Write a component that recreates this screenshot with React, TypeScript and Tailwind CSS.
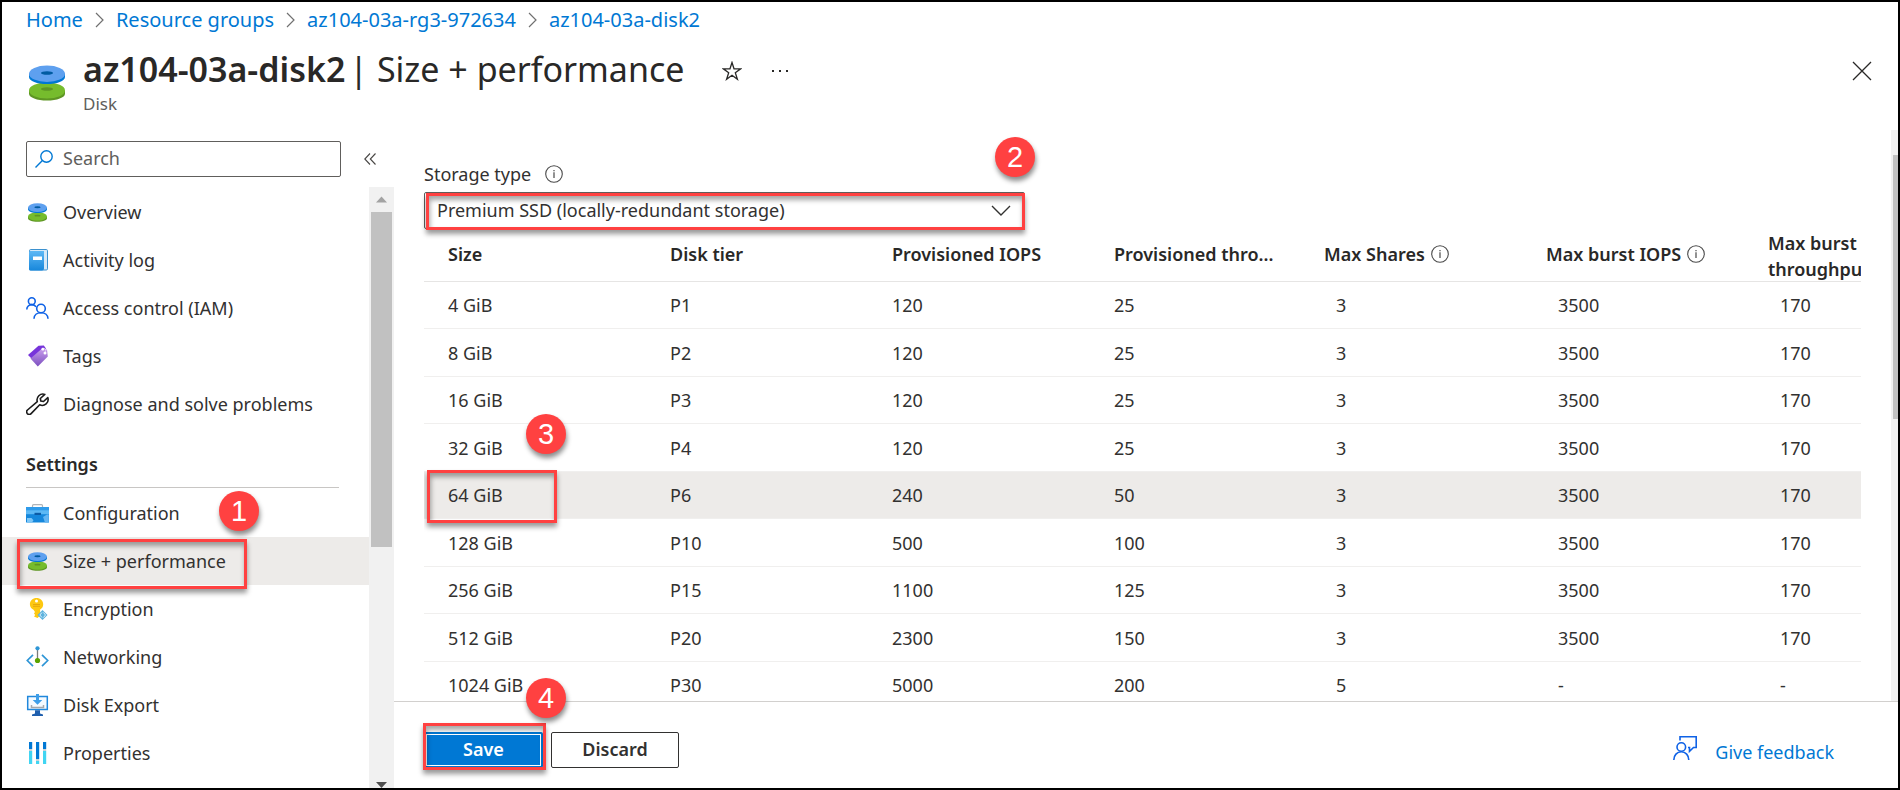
import { useState, type ReactNode } from "react";

type IconProps = { className?: string };

function DiskIcon({ className = "size-[19px]" }: IconProps) {
  return (
    <svg viewBox="0 0 36 36" className={className} aria-hidden="true">
      <path d="M0 25.5v3.2C0 32.600 8 35.500 18 35.500s18-2.900 18-6.800v-3.200z" fill="#5e9624" />
      <ellipse cx="18" cy="25.500" rx="18" ry="8" fill="#76bc2d" />
      <ellipse cx="18" cy="24" rx="6" ry="1.700" fill="#5e9624" />
      <path d="M0 8.500v3.400C0 16 8 19 18 19s18-3 18-7.100V8.500z" fill="#0078d4" />
      <ellipse cx="18" cy="8.700" rx="18" ry="8.200" fill="#5ea0ef" />
      <ellipse cx="18" cy="8" rx="6" ry="1.800" fill="#005ba1" />
    </svg>
  );
}

function LogIcon() {
  return (
    <svg viewBox="0 0 22 22" className="size-[22px]" aria-hidden="true">
      <defs>
        <linearGradient id="log" x1="0" y1="0" x2="0" y2="1">
          <stop offset="0" stopColor="#5eb8f5" />
          <stop offset="1" stopColor="#1787db" />
        </linearGradient>
      </defs>
      <rect x="2.500" y="0.500" width="18" height="20.500" rx="1.200" fill="#d5e9f8" stroke="#3c91cf" />
      <path d="M2 3a1.500 1.500 0 0 1 1.500-1H17v17.500a2 2 0 0 1-2 2H3.500A1.500 1.500 0 0 1 2 20z" fill="url(#log)" />
      <rect x="6" y="7.500" width="9" height="3.500" fill="#fff" />
    </svg>
  );
}

function PeopleIcon() {
  return (
    <svg viewBox="0 0 23 22" className="h-[22px] w-[23px]" fill="none" stroke="#0f62e6" strokeWidth="1.600" aria-hidden="true">
      <circle cx="5.800" cy="4.200" r="3.400" />
      <path d="M.8 12.500C.8 9.600 3 7.600 5.800 7.600c2 0 3.500.9 4.300 2.300" />
      <circle cx="15" cy="11.500" r="4.300" />
      <path d="M8 21.800c0-3.600 3-6 7-6s7 2.400 7 6" />
    </svg>
  );
}

function TagIcon() {
  return (
    <svg viewBox="0 0 22 22" className="size-[22px]" aria-hidden="true">
      <defs>
        <linearGradient id="tag" x1="0" y1="0" x2="0" y2="1">
          <stop offset="0" stopColor="#c69aeb" />
          <stop offset="1" stopColor="#7b4fbf" />
        </linearGradient>
      </defs>
      <path d="M1 10 11.500.8l5.300-.4 2.200 3L6 15z" fill="#7734da" />
      <path d="M3.500 13.500 14.200 4.200l5.800.4.800 7L10.800 21.500z" fill="url(#tag)" />
      <circle cx="15.800" cy="4.200" r="1.400" fill="#fff" />
      <circle cx="18" cy="8" r="1.500" fill="#fff" />
      <path d="M16.600 3.200c2.200.4 2.700 2 1.700 4" fill="none" stroke="#e9dcf7" strokeWidth=".8" />
    </svg>
  );
}

function WrenchIcon() {
  return (
    <svg viewBox="0 0 23 22" className="h-[22px] w-[23px]" fill="none" stroke="#1b1b1b" strokeWidth="1.600" strokeLinejoin="round" aria-hidden="true">
      <path d="M18.800 1.400a5.900 5.900 0 0 0-7.500 7.300L1.500 17a2.600 2.600 0 0 0-.2 3.600 2.600 2.600 0 0 0 3.800 0l8.600-8.800a5.900 5.900 0 0 0 8.100-7.200l-4.300 3.900-2.700-.5-.5-2.500z" />
    </svg>
  );
}

function ToolboxIcon() {
  return (
    <svg viewBox="0 0 23 22" className="h-[22px] w-[23px]" aria-hidden="true">
      <path d="M6.500 5.500V3.700a1 1 0 0 1 1-1h8a1 1 0 0 1 1 1v1.800" fill="none" stroke="#b0b4b8" strokeWidth="1.200" />
      <rect x="0" y="5" width="23" height="15.500" rx=".6" fill="#1587dc" />
      <rect x="0" y="5" width="23" height="3.200" fill="#2f9bea" />
      <rect x="0" y="8.200" width="23" height="4" fill="#5cb8f5" />
      <rect x="8.500" y="10.800" width="6.500" height="2.200" fill="#0c5ba6" />
      <path d="M1 16h4.500l2 2.200-1.500 2.300H1z" fill="#7cc6f7" />
      <path d="m17 15 4-2.500h1.800v8H19z" fill="#63b5f3" />
    </svg>
  );
}

function KeyIcon() {
  return (
    <svg viewBox="0 0 22 22" className="size-[22px]" aria-hidden="true">
      <path d="M9.500 0c3.700 0 6.700 2.600 6.700 6.200 0 2.400-1.200 4.200-3.100 5.300v6L10.500 20 7 18.500l1.200-1.500L7 15.500 8 14l-1.500-2.300C4.200 10.500 2.900 8.600 2.900 6.200 2.900 2.600 5.800 0 9.500 0z" fill="#fdc811" />
      <circle cx="9.500" cy="3" r="1.500" fill="#fff" />
      <path d="M6 6.500h7M6 8.300h7" stroke="#e2a30b" strokeWidth=".9" />
      <path d="m15.500 12 5 5-5 5-5-5z" fill="#5cb2de" />
      <path d="m15 14.500-2.200 2.500 2.200 2.500M16.500 14.500l2 2.500-2 2.500" fill="none" stroke="#fff" strokeWidth=".8" />
    </svg>
  );
}

function NetworkIcon() {
  return (
    <svg viewBox="0 0 23 22" className="h-[22px] w-[23px]" aria-hidden="true">
      <path d="M11.500 3v12" stroke="#7a7a7a" strokeWidth="1.300" />
      <circle cx="11.500" cy="2.300" r="2.100" fill="#2f96d6" />
      <circle cx="11.500" cy="14.500" r="2.600" fill="#5ba300" />
      <path d="M7 8.800 1.300 14.500 7 20.200M16 8.800l5.700 5.700-5.700 5.700" fill="none" stroke="#2f96d6" strokeWidth="1.700" />
    </svg>
  );
}

function ExportIcon() {
  return (
    <svg viewBox="0 0 23 22" className="h-[22px] w-[23px]" aria-hidden="true">
      <rect x="1.700" y="2.500" width="19.600" height="13" fill="#f4faff" stroke="#2088dc" strokeWidth="1.500" />
      <path d="M10 0h3v6h3.300l-4.800 4.800L6.700 6H10z" fill="#3d9ee9" />
      <path d="M5.500 11v2.500h12V11" fill="none" stroke="#a3a8ad" strokeWidth="1.500" />
      <path d="M9 16.200h5v3.200l3 1V22H6v-1.600l3-1z" fill="#1f5fae" />
    </svg>
  );
}

function PropertiesIcon() {
  return (
    <svg viewBox="0 0 23 22" className="h-[22px] w-[23px]" aria-hidden="true">
      <path d="M3 0h3.200v7H3zM10 0h3.200v17H10zM17 0h3.200v7H17z" fill="#0078d4" />
      <path d="M3 7h3.200v2H3zM10 17h3.200v2H10zM17 7h3.200v2H17z" fill="#c9d3da" />
      <path d="M3 9h3.200v13H3zM10 19h3.200v3H10zM17 9h3.200v13H17z" fill="#41d5f2" />
    </svg>
  );
}

function InfoIcon() {
  return (
    <svg viewBox="0 0 18 18" className="size-[18px] shrink-0" fill="none" stroke="#4a4a4a" aria-hidden="true">
      <circle cx="9" cy="9" r="8.300" strokeWidth="1.100" />
      <path d="M9 7.300v5.700M9 5v1.300" strokeWidth="1.200" />
    </svg>
  );
}

function Crumb() {
  return (
    <svg viewBox="0 0 9 16" className="h-4 w-[9px]" fill="none" stroke="#707070" strokeWidth="1.200" aria-hidden="true">
      <path d="m1 1 7 7-7 7" />
    </svg>
  );
}

function Badge({ children, className }: { children: ReactNode; className: string }) {
  return (
    <span
      className={`absolute z-10 flex size-10 items-center justify-center rounded-full bg-[#ff4141] font-['Liberation_Sans',sans-serif] text-[29px] leading-none font-normal text-white shadow-[1px_4px_5px_rgba(0,0,0,0.45)] ${className}`}
    >
      {children}
    </span>
  );
}

function Marker({ className }: { className: string }) {
  return (
    <span
      className={`pointer-events-none absolute border-3 border-[#ff4141] shadow-[0_4px_5px_rgba(0,0,0,0.4),inset_1px_4px_5px_rgba(0,0,0,0.35)] ${className}`}
    />
  );
}

const general = [
  { label: "Overview", icon: <DiskIcon /> },
  { label: "Activity log", icon: <LogIcon /> },
  { label: "Access control (IAM)", icon: <PeopleIcon /> },
  { label: "Tags", icon: <TagIcon /> },
  { label: "Diagnose and solve problems", icon: <WrenchIcon /> },
];

const settings = [
  { label: "Configuration", icon: <ToolboxIcon /> },
  { label: "Size + performance", icon: <DiskIcon />, selected: true },
  { label: "Encryption", icon: <KeyIcon /> },
  { label: "Networking", icon: <NetworkIcon /> },
  { label: "Disk Export", icon: <ExportIcon /> },
  { label: "Properties", icon: <PropertiesIcon /> },
];

function NavItem({ label, icon, selected }: { label: string; icon: ReactNode; selected?: boolean }) {
  return (
    <li className="relative">
      <a
        href="#"
        aria-current={selected ? "page" : undefined}
        className={`flex h-12 items-center gap-[14px] pl-6 ${selected ? "bg-[#edebe9]" : ""}`}
      >
        <span className="flex w-[23px] justify-center">{icon}</span>
        {label}
      </a>
      {selected && (
        <>
          <Marker className="top-[2px] left-[15px] h-[50px] w-[230px]" />
          <Badge className="-top-[46px] left-[217px]">1</Badge>
        </>
      )}
    </li>
  );
}

const rows = [
  ["4 GiB", "P1", "120", "25", "3", "3500", "170"],
  ["8 GiB", "P2", "120", "25", "3", "3500", "170"],
  ["16 GiB", "P3", "120", "25", "3", "3500", "170"],
  ["32 GiB", "P4", "120", "25", "3", "3500", "170"],
  ["64 GiB", "P6", "240", "50", "3", "3500", "170"],
  ["128 GiB", "P10", "500", "100", "3", "3500", "170"],
  ["256 GiB", "P15", "1100", "125", "3", "3500", "170"],
  ["512 GiB", "P20", "2300", "150", "3", "3500", "170"],
  ["1024 GiB", "P30", "5000", "200", "5", "-", "-"],
];

const crumbs = ["Home", "Resource groups", "az104-03a-rg3-972634", "az104-03a-disk2"];

export default function App() {
  const [selected, setSelected] = useState("64 GiB");
  const th = "border-b border-[#e6e5e4] p-0 pb-1 pl-6 text-left font-semibold text-[#292827]";
  const thInfo = "border-b border-[#e6e5e4] p-0 pb-1 pl-3 text-left font-semibold text-[#292827]";

  return (
    <div className="flex h-screen flex-col overflow-hidden border-2 border-black bg-white font-['Noto_Sans','Open_Sans',sans-serif] text-[18px] leading-6 text-[#323130]">
      <header className="h-32 shrink-0">
        <nav aria-label="Breadcrumb" className="flex h-9 items-center gap-3 pl-6 text-[20px] text-[#0078d4]">
          {crumbs.map((c, i) => (
            <span key={c} className="flex items-center gap-3">
              {i > 0 && <Crumb />}
              <a href="#">{c}</a>
            </span>
          ))}
        </nav>
        <div className="flex pr-[26px] pl-[27px]">
          <DiskIcon className="mt-[27px] size-9" />
          <div className="ml-[18px] pt-2">
            <h1 className="flex gap-1 text-[34px] leading-[46px] whitespace-nowrap text-[#292827]">
              <span className="font-semibold">az104-03a-disk2</span>
              <span>| Size + performance</span>
            </h1>
            <p className="text-[17px] leading-6 text-[#605e5c]">Disk</p>
          </div>
          <button type="button" aria-label="Add to favorites" className="mt-[23px] ml-[38px] h-5">
            <svg viewBox="0 0 20 20" className="size-5" fill="none" stroke="#292827" strokeWidth="1.300">
              <path d="m10 1.500 2 6.300h6.700l-5.400 3.900 2.100 6.500L10 14.200l-5.400 4 2.100-6.500-5.400-3.900H8z" />
            </svg>
          </button>
          <button type="button" aria-label="More actions" className="mt-[23px] ml-[29px] h-5">
            <svg viewBox="0 0 18 20" className="h-5 w-[18px]" fill="#292827">
              <path d="M1 9h2v2H1zM8 9h2v2H8zM15 9h2v2h-2z" />
            </svg>
          </button>
          <button type="button" aria-label="Close" className="mt-[23px] ml-auto h-5">
            <svg viewBox="0 0 20 20" className="size-5" fill="none" stroke="#292827" strokeWidth="1.300">
              <path d="m1 1 18 18M19 1 1 19" />
            </svg>
          </button>
        </div>
      </header>

      <div className="flex min-h-0 flex-1">
        <aside className="flex w-[392px] shrink-0 flex-col">
          <div className="flex h-[57px] shrink-0 items-center pl-6">
            <label className="flex h-9 w-[315px] items-center gap-[10px] rounded-[2px] border border-[#605e5c] px-2">
              <svg viewBox="0 0 18 18" className="size-[18px] shrink-0" fill="none" stroke="#0078d4" strokeWidth="1.400" aria-hidden="true">
                <circle cx="11.500" cy="6.500" r="5.700" />
                <path d="M7.400 10.600.5 17.500" />
              </svg>
              <input
                type="search"
                aria-label="Search"
                placeholder="Search"
                className="w-full bg-transparent pb-[2px] outline-none placeholder:text-[#605e5c]"
              />
            </label>
            <button type="button" aria-label="Collapse menu" className="ml-[23px]">
              <svg viewBox="0 0 12 12" className="size-3" fill="none" stroke="#484644" strokeWidth="1.100">
                <path d="M6 .5.800 6 6 11.500M11.500.5 6.300 6l5.200 5.500" />
              </svg>
            </button>
          </div>
          <div className="flex min-h-0 flex-1">
            <nav aria-label="Disk menu" className="min-w-0 flex-1 overflow-hidden pt-px">
              <ul>
                {general.map((n) => (
                  <NavItem key={n.label} {...n} />
                ))}
              </ul>
              <h2 className="mr-[30px] ml-6 flex h-[60px] items-center border-b border-[#c8c6c4] pt-3 font-semibold text-[#292827]">
                Settings
              </h2>
              <ul className="pt-px">
                {settings.map((n) => (
                  <NavItem key={n.label} {...n} />
                ))}
              </ul>
            </nav>
            <div className="flex w-[25px] flex-col items-center overflow-hidden bg-[#f1f1f1]">
              <svg viewBox="0 0 25 25" className="size-[25px] shrink-0" fill="#a3a3a3" aria-hidden="true">
                <path d="m12.500 9.500 5.500 6H7z" />
              </svg>
              <div className="h-[335px] w-[21px] shrink-0 bg-[#c1c1c1]" />
              <svg viewBox="0 0 25 6" className="mt-auto h-[6px] w-[25px] shrink-0" fill="#505050" aria-hidden="true">
                <path d="M7 0h11l-5.500 6z" />
              </svg>
            </div>
          </div>
        </aside>

        <main className="flex min-w-0 flex-1 flex-col">
          <div className="flex min-h-0 flex-1">
            <div className="min-w-0 flex-1 overflow-hidden pt-8 pr-[30px] pl-[30px]">
              <div className="mb-[6px] flex h-6 items-center gap-[14px]">
                <label htmlFor="storage">Storage type</label>
                <InfoIcon />
              </div>
              <div className="relative h-[38px] w-full max-w-[601px]">
                <select
                  id="storage"
                  className="h-[37px] w-full appearance-none rounded-[2px] border border-[#605e5c] bg-white pb-[2px] pl-3 text-[#323130] outline-none"
                >
                  <option>Premium SSD (locally-redundant storage)</option>
                </select>
                <svg viewBox="0 0 20 11" className="pointer-events-none absolute top-[13px] right-[14px] h-[11px] w-5" fill="none" stroke="#323130" strokeWidth="1.400" aria-hidden="true">
                  <path d="m1 1 9 9 9-9" />
                </svg>
                <Marker className="top-px left-[2px] h-[37px] w-[599px]" />
                <Badge className="-top-[55px] right-[-10px]">2</Badge>
              </div>
              <div className="overflow-x-clip">
                <table className="w-[1554px] table-fixed border-separate border-spacing-0">
                  <thead>
                    <tr className="h-[52px]">
                      <th className={th}>Size</th>
                      <th className={th}>Disk tier</th>
                      <th className={th}>Provisioned IOPS</th>
                      <th className={th}>Provisioned thro...</th>
                      <th className={thInfo}>
                        <span className="flex items-center gap-[6px]">
                          Max Shares <InfoIcon />
                        </span>
                      </th>
                      <th className={thInfo}>
                        <span className="flex items-center gap-[6px]">
                          Max burst IOPS <InfoIcon />
                        </span>
                      </th>
                      <th className="border-b border-[#e6e5e4] p-0 pl-3 text-left leading-[26px] font-semibold text-[#292827]">
                        <div className="-mb-px">
                          Max burst
                          <br />
                          throughput
                        </div>
                      </th>
                    </tr>
                  </thead>
                  <tbody>
                    {rows.map((r) => (
                      <tr
                        key={r[0]}
                        onClick={() => setSelected(r[0])}
                        className={`odd:h-[47px] even:h-12 ${r[0] === selected ? "bg-[#edebe9]" : ""}`}
                      >
                        {r.map((c, i) => (
                          <td key={i} className="relative border-b border-[#f0efee] p-0 pl-6">
                            {c}
                            {i === 0 && c === "64 GiB" && (
                              <>
                                <Marker className="-top-[2px] left-[3px] h-[53px] w-[130px]" />
                                <Badge className="-top-[58px] left-[102px]">3</Badge>
                              </>
                            )}
                          </td>
                        ))}
                      </tr>
                    ))}
                  </tbody>
                </table>
              </div>
            </div>
            <div className="flex w-[7px] shrink-0 flex-col items-end bg-[#f1f1f1] pt-[25px]">
              <div className="h-[264px] w-[5px] bg-[#c1c1c1]" />
            </div>
          </div>

          <footer className="flex h-[87px] shrink-0 items-center gap-2 border-t border-[#d2d0ce] pt-[10px] pr-16 pl-[30px]">
            <div className="relative">
              <button
                type="button"
                className="block h-9 w-[119px] rounded-[2px] bg-[#0078d4] pb-[2px] font-semibold text-white outline-1 -outline-offset-3 outline-white"
              >
                Save
              </button>
              <Marker className="-top-[9px] -left-px h-[47px] w-[123px]" />
              <Badge className="-top-[54px] left-[102px]">4</Badge>
            </div>
            <button
              type="button"
              className="h-9 w-32 rounded-[2px] border border-[#323130] bg-white pb-[2px] font-semibold text-[#323130]"
            >
              Discard
            </button>
            <a href="#" className="ml-auto flex items-start gap-[18px] text-[#0078d4]">
              <svg viewBox="0 0 24 24" className="size-6" fill="none" stroke="#0f62e6" strokeWidth="1.600" aria-hidden="true">
                <path d="M7 4.500V.8h16.200v10.700H20.500l-4 3.800v-3.800H15" />
                <circle cx="8.300" cy="11" r="4.300" />
                <path d="M.8 24c0-4.800 3.200-8.200 7.500-8.200s7.500 3.400 7.500 8.200" />
              </svg>
              <span className="pt-1">Give feedback</span>
            </a>
          </footer>
        </main>
      </div>
    </div>
  );
}
